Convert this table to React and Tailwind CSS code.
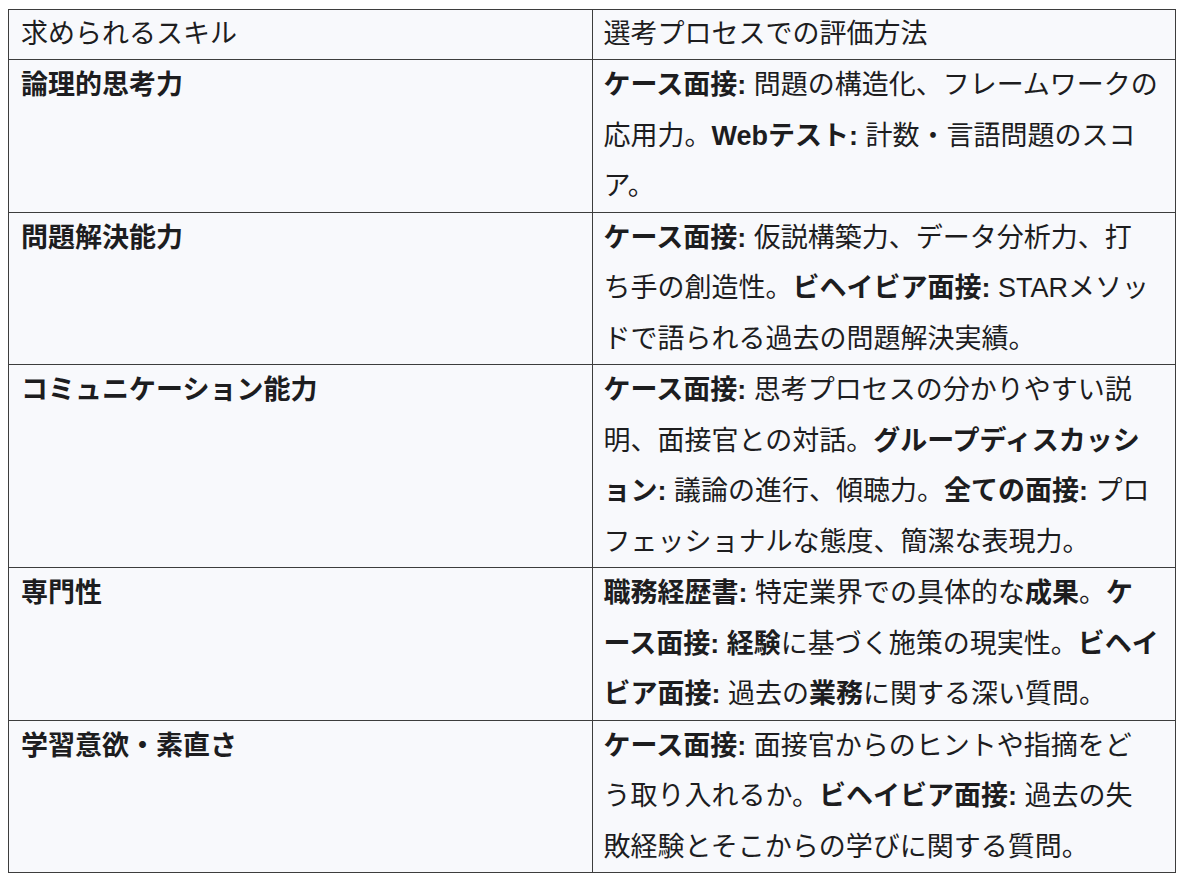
const rows = [
  {
    skill: "論理的思考力",
    lines: [
      [["b", "ケース面接:"], ["t", " 問題の構造化、フレームワークの"]],
      [["t", "応用力。"], ["b", "Webテスト:"], ["t", " 計数・言語問題のスコ"]],
      [["t", "ア。"]],
    ],
  },
  {
    skill: "問題解決能力",
    lines: [
      [["b", "ケース面接:"], ["t", " 仮説構築力、データ分析力、打"]],
      [["t", "ち手の創造性。"], ["b", "ビヘイビア面接:"], ["t", " STARメソッ"]],
      [["t", "ドで語られる過去の問題解決実績。"]],
    ],
  },
  {
    skill: "コミュニケーション能力",
    lines: [
      [["b", "ケース面接:"], ["t", " 思考プロセスの分かりやすい説"]],
      [["t", "明、面接官との対話。"], ["b", "グループディスカッシ"]],
      [["b", "ョン:"], ["t", " 議論の進行、傾聴力。"], ["b", "全ての面接:"], ["t", " プロ"]],
      [["t", "フェッショナルな態度、簡潔な表現力。"]],
    ],
  },
  {
    skill: "専門性",
    lines: [
      [["b", "職務経歴書:"], ["t", " 特定業界での具体的な"], ["b", "成果"], ["t", "。"], ["b", "ケ"]],
      [["b", "ース面接:"], ["t", " "], ["b", "経験"], ["t", "に基づく施策の現実性。"], ["b", "ビヘイ"]],
      [["b", "ビア面接:"], ["t", " 過去の"], ["b", "業務"], ["t", "に関する深い質問。"]],
    ],
  },
  {
    skill: "学習意欲・素直さ",
    lines: [
      [["b", "ケース面接:"], ["t", " 面接官からのヒントや指摘をど"]],
      [["t", "う取り入れるか。"], ["b", "ビヘイビア面接:"], ["t", " 過去の失"]],
      [["t", "敗経験とそこからの学びに関する質問。"]],
    ],
  },
];

function Segment({ kind, text }) {
  if (kind === "b") return <strong className="font-bold">{text}</strong>;
  return <span>{text}</span>;
}

export default function App() {
  return (
    <div className="min-h-screen bg-white pt-[9px] pl-2 font-['Liberation_Sans','Noto_Sans_CJK_JP',sans-serif] text-[#1d1d1f]">
      <table className="w-[1168px] table-fixed border-collapse bg-[#f8f9fc] text-[27px]">
        <thead>
          <tr className="leading-[49px]">
            <th className="w-1/2 border border-[#3d3d3d] pl-3 pr-2 text-left font-normal align-top">求められるスキル</th>
            <th className="w-1/2 border border-[#3d3d3d] pl-[11px] pr-1 text-left font-normal align-top">選考プロセスでの評価方法</th>
          </tr>
        </thead>
        <tbody className="leading-[50.5px]">
          {rows.map((row) => (
            <tr key={row.skill}>
              <td className="border border-[#3d3d3d] pl-3 pr-2 align-top font-bold">{row.skill}</td>
              <td className="border border-[#3d3d3d] pl-[11px] pr-1 align-top whitespace-nowrap">
                {row.lines.map((line, li) => (
                  <div key={li}>
                    {line.map(([kind, text], i) => (
                      <Segment key={i} kind={kind} text={text} />
                    ))}
                  </div>
                ))}
              </td>
            </tr>
          ))}
        </tbody>
      </table>
    </div>
  );
}
